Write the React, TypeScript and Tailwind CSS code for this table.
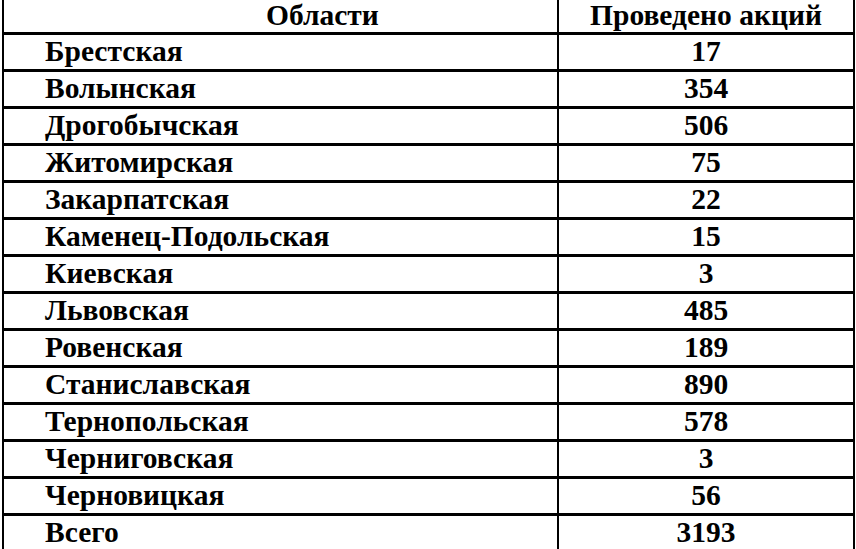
const rows: [string, string][] = [
  ['Брестская', '17'],
  ['Волынская', '354'],
  ['Дрогобычская', '506'],
  ['Житомирская', '75'],
  ['Закарпатская', '22'],
  ['Каменец-Подольская', '15'],
  ['Киевская', '3'],
  ['Львовская', '485'],
  ['Ровенская', '189'],
  ['Станиславская', '890'],
  ['Тернопольская', '578'],
  ['Черниговская', '3'],
  ['Черновицкая', '56'],
  ['Всего', '3193'],
]

export default function App() {
  return (
    <div className="h-[549px] w-[856px] overflow-hidden bg-white text-black [font-family:Liberation_Serif,serif]">
      <div className="ml-[2px] w-[853px] border-x-2 border-black">
        {/* header row, top edge is cropped in the source */}
        <div className="grid h-[32px] grid-cols-[555px_1fr] text-[29.5px] font-bold leading-none">
          <div className="border-r-2 border-black pl-[262px] pt-[1px]">Области</div>
          <div className="pt-[1px] text-center">Проведено акций</div>
        </div>
        {rows.map(([name, count]) => (
          <div key={name} className="grid h-[37px] grid-cols-[555px_1fr] border-t-[3px] border-black text-[29.5px] font-bold leading-none">
            <div className="border-r-2 border-black pl-[41px] pt-[2px]">{name}</div>
            <div className="pt-[2px] text-center">{count}</div>
          </div>
        ))}
      </div>
    </div>
  )
}
